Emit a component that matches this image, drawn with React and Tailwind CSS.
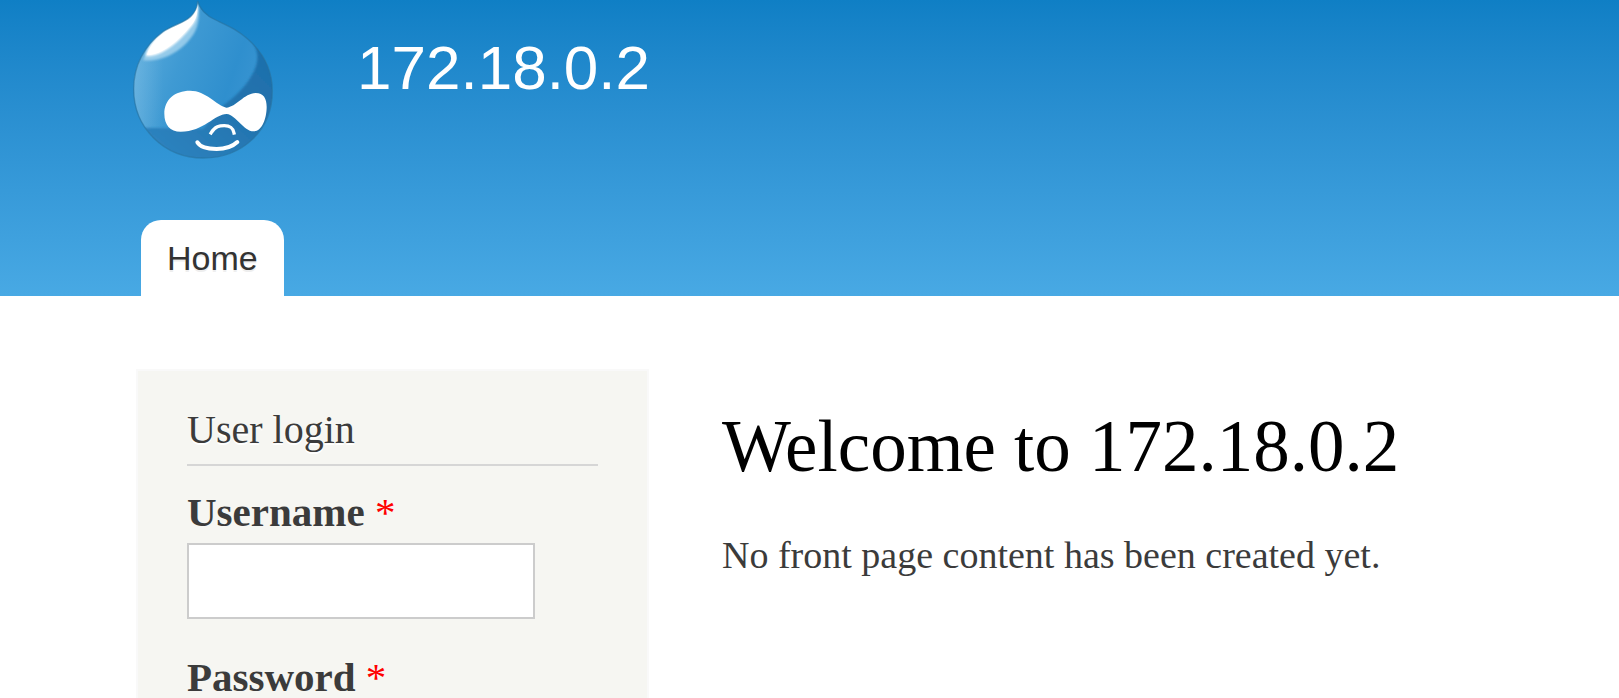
const FIELDS = [
  { id: 'edit-name', label: 'Username', type: 'text' },
  { id: 'edit-pass', label: 'Password', type: 'password' },
];

const DROP = 'M234 6C241 33 257 49 288 63C326 81 355 93 385 121C432 162 458 213 458 276C458 397 366 477 251 477C132 477 42 386 42 270C42 200 74 139 130 98C176 69 230 66 234 6Z';

function Logo() {
  return (
    <svg viewBox="40 3 420 477" className="w-[140px] h-[159px]" role="img" aria-label="Home">
      <defs>
        <linearGradient id="drop" x1="0" y1="0.2" x2="1" y2="0.6">
          <stop offset="0%" stopColor="#5cacdc" />
          <stop offset="35%" stopColor="#3f9ad3" />
          <stop offset="70%" stopColor="#2f8fce" />
          <stop offset="100%" stopColor="#3f98d4" />
        </linearGradient>
        <linearGradient id="shade" x1="0" y1="1" x2="1" y2="0">
          <stop offset="0%" stopColor="#3086c2" />
          <stop offset="60%" stopColor="#2273ae" />
          <stop offset="100%" stopColor="#1d6fab" />
        </linearGradient>
        <linearGradient id="edge" x1="0" y1="0" x2="1" y2="0">
          <stop offset="0%" stopColor="#88c4e8" stopOpacity="0.4" />
          <stop offset="100%" stopColor="#88c4e8" stopOpacity="0" />
        </linearGradient>
        <filter id="soft" x="-10%" y="-10%" width="120%" height="120%">
          <feGaussianBlur stdDeviation="3" />
        </filter>
        <clipPath id="dropClip">
          <path d={DROP} />
        </clipPath>
      </defs>
      <g clipPath="url(#dropClip)">
        <rect x="40" y="0" width="425" height="480" fill="url(#drop)" />
        <rect x="40" y="100" width="90" height="300" fill="url(#edge)" />
        {/* darker lower part and right flank */}
        <path d="M392 120C420 155 418 190 398 226C378 262 350 292 312 318L250 390L70 386C110 450 170 480 255 480L465 480L465 120Z" fill="url(#shade)" filter="url(#soft)" />
        {/* highlight under the tip */}
        <path d="M234 6C240 42 240 76 222 105C190 155 130 190 70 184C84 140 108 110 134 92C180 66 230 62 234 6Z" fill="#a9d6ef" opacity="0.8" filter="url(#soft)" />
        <path d="M234 10C236 58 226 72 205 95C170 136 121 175 78 171C84 142 108 112 136 94C182 68 229 62 234 10Z" fill="#fff" filter="url(#soft)" />
        <path d="M234 10C235 58 224 70 203 92C168 132 121 170 82 167C90 142 112 114 138 98C184 70 229 62 234 10Z" fill="#fff" />
      </g>
      <path d={DROP} fill="none" stroke="#27719f" strokeWidth="4" opacity="0.6" />
      {/* eyes */}
      <path d="M134 344C134 302 165 275 211 275C259 275 290 318 320 326C350 324 373 283 408 282C432 282 441 299 441 324C441 358 427 397 402 397C371 397 350 348 321 345C285 345 253 398 183 398C151 398 134 377 134 344Z" fill="#fff" />
      {/* nose and mouth */}
      <path d="M274 402C286 381 300 380 314 380C334 380 340 388 343 402" fill="none" stroke="#fff" strokeWidth="10" strokeLinecap="square" />
      <path d="M233 430C241 444 262 450 291 450C320 450 338 443 353 429" fill="none" stroke="#fff" strokeWidth="12" strokeLinecap="round" />
    </svg>
  );
}

export default function App() {
  return (
    <div className="h-screen overflow-hidden bg-white font-['Liberation_Serif',serif] text-[#3b3b3b]">
      {/* header */}
      <header className="flex flex-col justify-between h-[296px] px-[133px] bg-linear-to-b from-[#0f7fc5] to-[#48a9e4] font-['Liberation_Sans',sans-serif]">
        <div className="flex items-start gap-[84px]">
          <a href="#home"><Logo /></a>
          <a href="#home" className="pt-[30px] text-[62px] leading-[76px] text-white">172.18.0.2</a>
        </div>
        <nav className="flex px-2">
          <a href="#home" className="h-[76px] px-[26px] rounded-t-[20px] bg-white text-[34px] leading-[76px] text-[#333] text-shadow-[0_2px_0_#eee]">
            Home
          </a>
        </nav>
      </header>

      <div className="flex items-start gap-[73px] px-[136px] pt-[73px]">
        {/* sidebar */}
        <aside className="w-[513px] shrink-0 border-2 border-[#f9f9f9] bg-[#f6f6f2] px-[49px] pt-8 pb-12">
          <h2 className="border-b-2 border-[#d6d6d6] pb-2 text-[40px] leading-[53px] text-shadow-[0_2px_0_#fff]">User login</h2>
          <form className="flex flex-col gap-9 pt-6">
            {FIELDS.map((f) => (
              <div key={f.id} className="flex flex-col gap-2">
                <label htmlFor={f.id} className="text-[41px] leading-[45px] font-bold">
                  {f.label} <span className="font-normal text-[#f00]">*</span>
                </label>
                <input id={f.id} type={f.type} required className="h-[76px] w-[348px] border-2 border-[#ccc] bg-white px-2 text-[34px] outline-none" />
              </div>
            ))}
          </form>
        </aside>

        {/* content */}
        <main className="flex flex-col gap-10 pt-9">
          <h1 className="text-[73px] leading-[84px] text-black">Welcome to 172.18.0.2</h1>
          <p className="text-[38px] leading-[53px]">No front page content has been created yet.</p>
        </main>
      </div>
    </div>
  );
}
